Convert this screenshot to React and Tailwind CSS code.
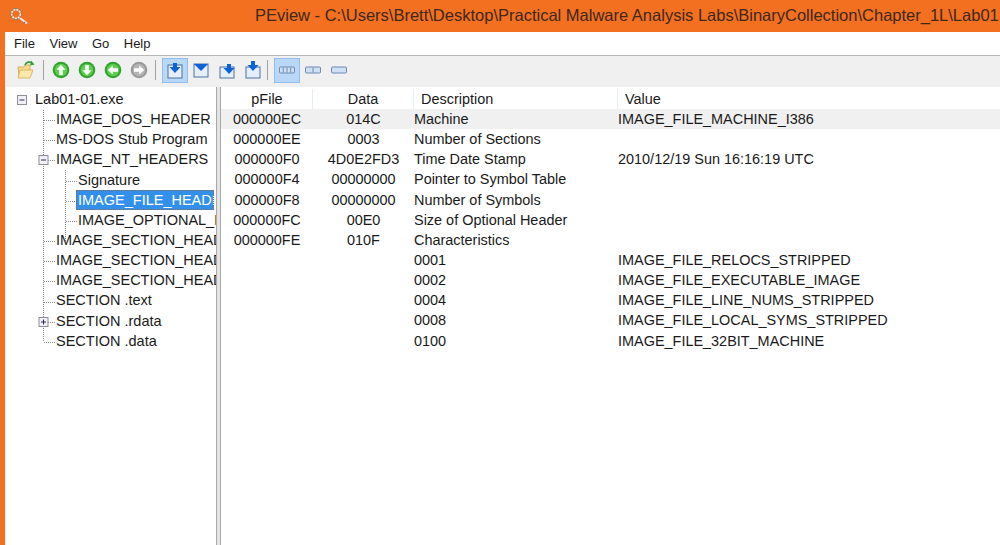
import React from "react";

const FONT = { fontFamily: '"Liberation Sans", Arial, sans-serif' };

const treeRows = [
  { label: "Lab01-01.exe", indent: 35 },
  { label: "IMAGE_DOS_HEADER", indent: 56 },
  { label: "MS-DOS Stub Program", indent: 56 },
  { label: "IMAGE_NT_HEADERS", indent: 56 },
  { label: "Signature", indent: 78 },
  { label: "IMAGE_FILE_HEADER", indent: 78, selected: true },
  { label: "IMAGE_OPTIONAL_HEADER", indent: 78 },
  { label: "IMAGE_SECTION_HEADER .text", indent: 56 },
  { label: "IMAGE_SECTION_HEADER .rdata", indent: 56 },
  { label: "IMAGE_SECTION_HEADER .data", indent: 56 },
  { label: "SECTION .text", indent: 56 },
  { label: "SECTION .rdata", indent: 56 },
  { label: "SECTION .data", indent: 56 },
];

const tableRows = [
  ["000000EC", "014C", "Machine", "IMAGE_FILE_MACHINE_I386"],
  ["000000EE", "0003", "Number of Sections", ""],
  ["000000F0", "4D0E2FD3", "Time Date Stamp", "2010/12/19 Sun 16:16:19 UTC"],
  ["000000F4", "00000000", "Pointer to Symbol Table", ""],
  ["000000F8", "00000000", "Number of Symbols", ""],
  ["000000FC", "00E0", "Size of Optional Header", ""],
  ["000000FE", "010F", "Characteristics", ""],
  ["", "", "0001", "IMAGE_FILE_RELOCS_STRIPPED"],
  ["", "", "0002", "IMAGE_FILE_EXECUTABLE_IMAGE"],
  ["", "", "0004", "IMAGE_FILE_LINE_NUMS_STRIPPED"],
  ["", "", "0008", "IMAGE_FILE_LOCAL_SYMS_STRIPPED"],
  ["", "", "0100", "IMAGE_FILE_32BIT_MACHINE"],
];

const GridTemplate = "grid grid-cols-[92px_101px_204px_1fr]";

const KeyIcon = () => (
  <svg width="28" height="28" viewBox="0 0 28 28" fill="none">
    <circle cx="12" cy="12" r="4.5" stroke="#f3f3f3" strokeWidth="2" strokeDasharray="2 1" />
    <circle cx="12" cy="12" r="5.6" stroke="#77706a" strokeWidth="0.7" />
    <path d="M16 16l7 5.5" stroke="#ece6e0" strokeWidth="2.2" />
    <path d="M21 20l-1.5 2" stroke="#8a8078" strokeWidth="1.4" />
  </svg>
);

const FolderIcon = () => (
  <svg width="20" height="20" viewBox="0 0 20 20">
    <path d="M2 7h6l1-2h5v11H3z" fill="#f7dc8c" stroke="#c9a24c" strokeWidth="0.8" />
    <path d="M2 18l2-8h13l-3 8z" fill="#fbe9a8" stroke="#d2ab55" strokeWidth="0.8" />
    <path d="M9 5c1-3 5-4 7-2" stroke="#2f9a2f" strokeWidth="1.6" fill="none" />
    <path d="M15 0.8l3.6 3.6-4.4 1.2z" fill="#2f9a2f" />
  </svg>
);

// Round nav button, rot is the arrow direction
const RoundArrow = ({ rot = 0, grey }) => (
  <svg width="18" height="18" viewBox="0 0 18 18">
    <circle cx="9" cy="9" r="8.3" fill={grey ? "#9a9a9a" : "#2fa52f"} />
    <circle cx="9" cy="9" r="6.2" fill={grey ? "#b4b4b4" : "#5fce4e"} />
    <g transform={`rotate(${rot} 9 9)`}>
      <path d="M9 3.8L13.6 8.8H10.8V14H7.2V8.8H4.4z" fill="#fff" />
    </g>
  </svg>
);

const Tray = ({ children, tall }) => (
  <svg width="20" height="20" viewBox="0 0 20 20">
    <rect x="3" y={tall ? 7 : 5} width="14" height={tall ? 11 : 13} fill="#e4effb" stroke="#4d6ea3" />
    {children}
  </svg>
);

const DownArrow = ({ x = 0, y = 4 }) => (
  <path transform={`translate(${x} ${y})`} d="M8 0h4v4h3.5L10 10 4.5 4H8z" fill="#0f62d6" />
);

const ViewIcon = ({ cells }) => (
  <svg width="16" height="10" viewBox="0 0 16 10">
    <rect x="0.5" y="2" width="15" height="6" rx="1" fill="#cfe0f5" stroke="#6f8ab5" />
    {cells > 1 &&
      Array.from({ length: cells - 1 }).map((_, i) => (
        <path key={i} d={`M${0.5 + (15 / cells) * (i + 1)} 2.5v5`} stroke="#6f8ab5" />
      ))}
  </svg>
);

const ToolButton = ({ active, children }) => (
  <div
    className={`w-[26px] h-[25px] flex items-center justify-center border ${
      active ? "bg-[#b9d8f7] border-[#90bfee]" : "border-transparent"
    }`}
  >
    {children}
  </div>
);

const Sep = () => <div className="w-px h-[20px] bg-[#a0a0a0]" />;

const Toolbar = () => (
  <div className="h-[31px] bg-[#f0f0f0] flex items-center pl-[8px] pb-[3px]">
    <ToolButton><FolderIcon /></ToolButton>
    <div className="ml-[4px] mr-[4px]"><Sep /></div>
    <ToolButton><RoundArrow /></ToolButton>
    <ToolButton><RoundArrow rot={180} /></ToolButton>
    <ToolButton><RoundArrow rot={-90} /></ToolButton>
    <ToolButton><RoundArrow rot={90} grey /></ToolButton>
    <div className="ml-[3px] mr-[6px]"><Sep /></div>
    <ToolButton active>
      <Tray><DownArrow y={3} /></Tray>
    </ToolButton>
    <ToolButton>
      <svg width="20" height="20" viewBox="0 0 20 20">
        <rect x="3" y="4" width="14" height="13" fill="#e4effb" stroke="#4d6ea3" />
        <path d="M3 4h14l-7 7z" fill="#0f62d6" />
      </svg>
    </ToolButton>
    <ToolButton>
      <Tray tall><DownArrow x={2} y={4} /></Tray>
    </ToolButton>
    <ToolButton>
      <Tray tall><DownArrow y={1} /></Tray>
    </ToolButton>
    <div className="ml-[1px] mr-[6px]"><Sep /></div>
    <ToolButton active><ViewIcon cells={4} /></ToolButton>
    <ToolButton><ViewIcon cells={2} /></ToolButton>
    <ToolButton><ViewIcon cells={1} /></ToolButton>
  </div>
);

// dotted connector lines and the +/- boxes of the tree
const TreeLines = () => {
  const Box = ({ cx, cy, plus }) => (
    <g>
      <rect x={cx - 4.5} y={cy - 4.5} width="9" height="9" fill="#f1f1f5" stroke="#8d8d9a" />
      <path d={`M${cx - 2.5} ${cy}h5`} stroke="#2a2a60" />
      {plus && <path d={`M${cx} ${cy - 2.5}v5`} stroke="#2a2a60" />}
    </g>
  );
  const dots = { stroke: "#8c8c8c", strokeDasharray: "1 1" };
  return (
    <svg className="absolute left-0 top-0 pointer-events-none" width="210" height="300">
      <path d="M37.5 23V255" {...dots} />
      <path d="M59.5 83V154" {...dots} />
      {[13, 33, 53, 73, 154, 174, 194, 215, 235, 255].map((y) => (
        <path key={y} d={`M38 ${y + 0.5}h12`} {...dots} />
      ))}
      {[94, 114, 134].map((y) => (
        <path key={y} d={`M60 ${y + 0.5}h12`} {...dots} />
      ))}
      <Box cx={16} cy={13} />
      <Box cx={37.5} cy={73} />
      <Box cx={37.5} cy={235} plus />
    </svg>
  );
};

const TreePanel = () => (
  <div className="relative w-[210px] bg-white overflow-hidden pt-[2px] text-[14.5px] leading-[20.15px] text-[#1a1a1a]">
    <TreeLines />
    {treeRows.map((r) => (
      <div key={r.label} className="relative h-[20.15px] overflow-hidden whitespace-nowrap" style={{ paddingLeft: r.indent - 6 }}>
        {r.selected ? (
          <span className="block w-[138px] -ml-[2px] pl-[2px] overflow-hidden bg-[#3390ea] text-white outline-1 -outline-offset-1 outline-dotted outline-[#8a6a50]">{r.label}</span>
        ) : (
          r.label
        )}
      </div>
    ))}
  </div>
);

const TablePanel = () => (
  <div className="flex-1 bg-white text-[14.45px] leading-[20.15px] text-[#1a1a1a] overflow-hidden">
    <div className={`${GridTemplate} h-[22px] pt-[2px] items-center`}>
      <div className="text-center pl-[1px] border-r border-[#e4eef8]">pFile</div>
      <div className="text-center border-r border-[#e4eef8]">Data</div>
      <div className="pl-[7px] border-r border-[#e4eef8]">Description</div>
      <div className="pl-[7px]">Value</div>
    </div>
    {tableRows.map((r, i) => (
      <div key={i} className={`${GridTemplate} h-[20.15px] overflow-hidden whitespace-nowrap ${i === 0 ? "bg-[#f0f0f0]" : ""}`}>
        <div className="text-center">{r[0]}</div>
        <div className="text-center">{r[1]}</div>
        <div>{r[2]}</div>
        <div>{r[3]}</div>
      </div>
    ))}
  </div>
);

export default function App() {
  return (
    <div className="w-[1000px] h-[545px] overflow-hidden flex flex-col bg-[#f37021]" style={FONT}>
      <div className="h-[32px] relative flex items-center shrink-0 overflow-hidden pb-[2px]">
        <div className="absolute left-[4px] top-[2px]"><KeyIcon /></div>
        <div className="pl-[255px] whitespace-nowrap text-[16.5px] text-[#40281a]">
          PEview - C:\Users\Brett\Desktop\Practical Malware Analysis Labs\BinaryCollection\Chapter_1L\Lab01
        </div>
      </div>
      <div className="flex-1 flex flex-col ml-[5px] bg-[#f0f0f0] min-h-0">
        <div className="h-[24px] bg-white border-b border-[#b8b8b8] flex items-center pl-[9px] gap-[14.5px] text-[13px] text-[#1a1a1a]">
          <span>File</span>
          <span>View</span>
          <span>Go</span>
          <span>Help</span>
        </div>
        <Toolbar />
        <div className="flex-1 flex min-h-0 pl-[1px]">
          <TreePanel />
          <div className="w-[5px] bg-[#e4e4e4] border-x border-[#a8a8a8]" />
          <TablePanel />
        </div>
      </div>
    </div>
  );
}
